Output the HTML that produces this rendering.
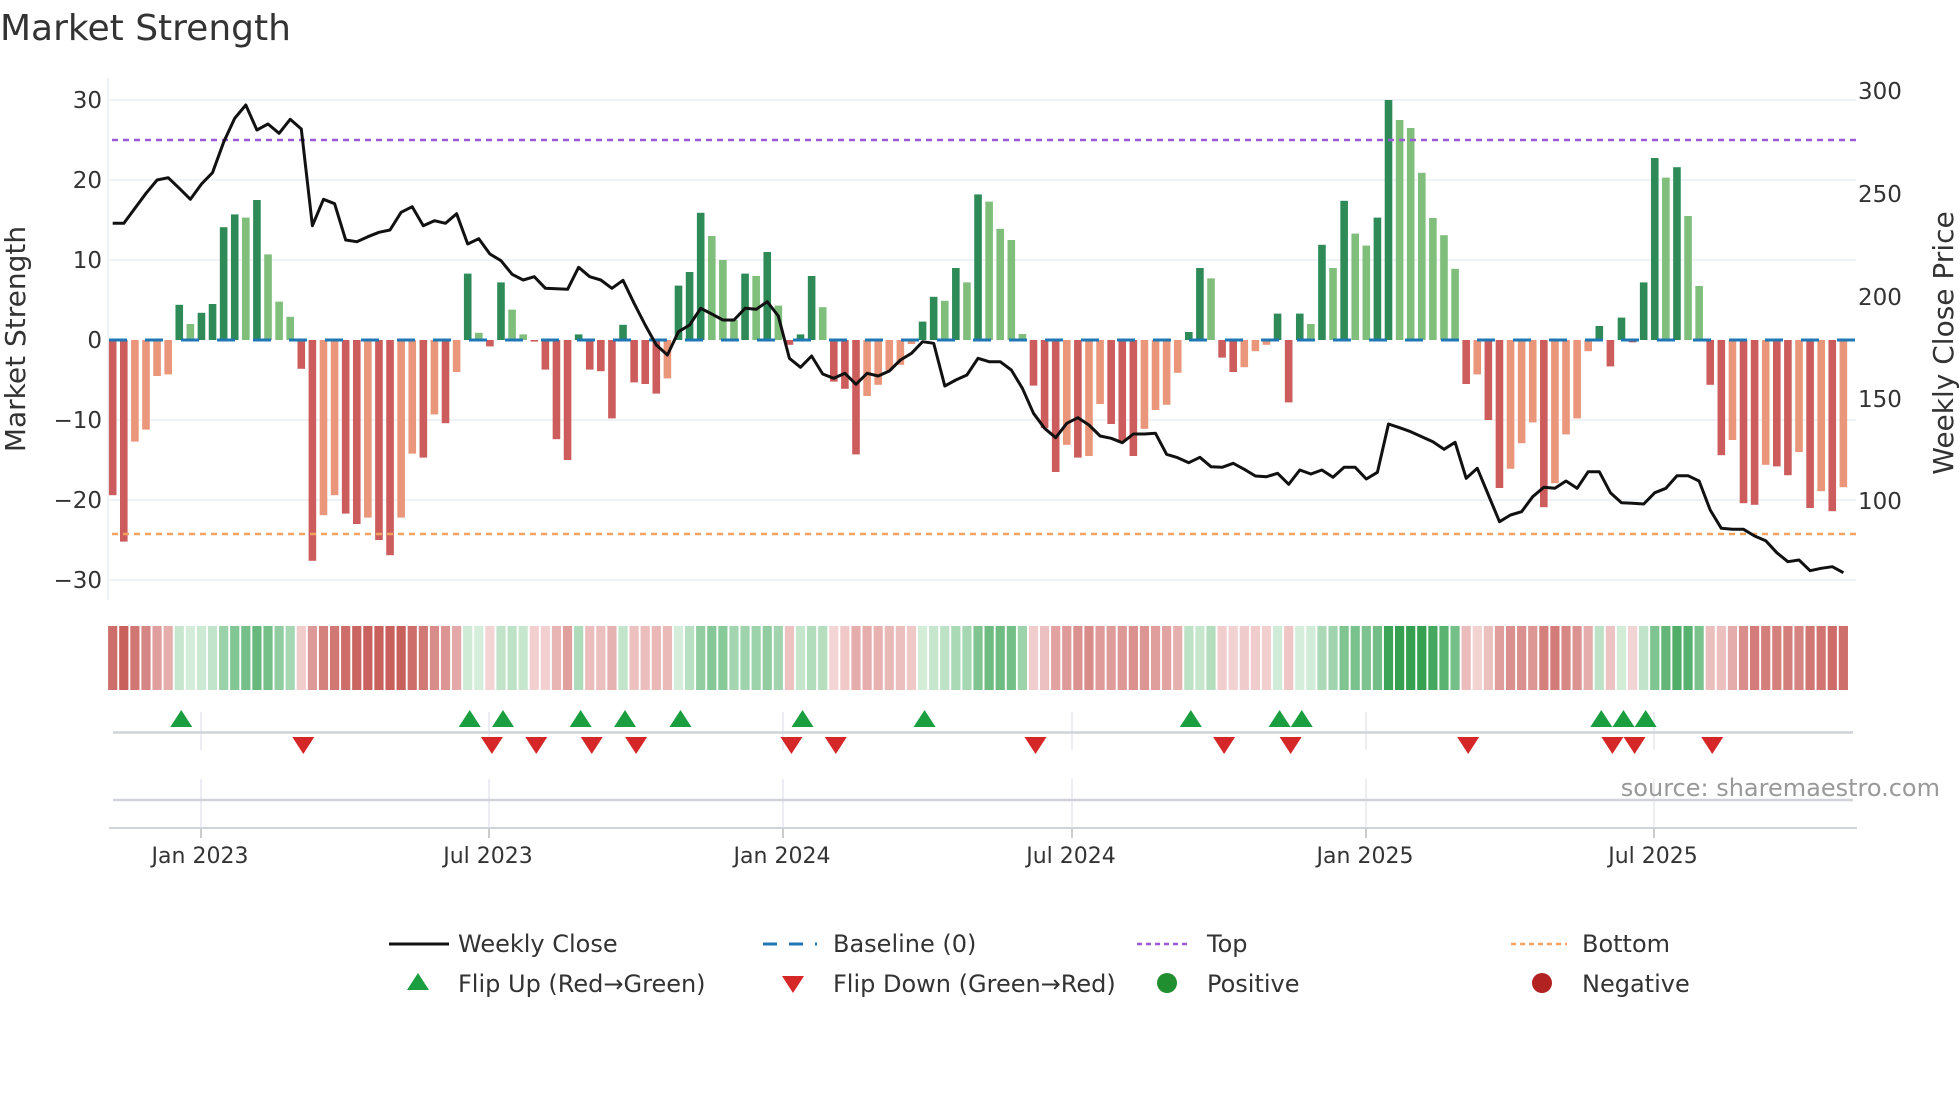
<!DOCTYPE html>
<html><head><meta charset="utf-8"><style>
html,body{margin:0;padding:0;background:#fff;}
svg{display:block;}
text{font-family:"DejaVu Sans","Liberation Sans",sans-serif;fill:#333;}
</style></head><body>
<svg id="s" width="1960" height="1102" viewBox="0 0 1960 1102" xmlns="http://www.w3.org/2000/svg">
<text x="0" y="40" font-size="36">Market Strength</text>
<g id="grid" stroke="#eceff4" stroke-width="1.5">
<line x1="108" y1="100" x2="1856" y2="100"/>
<line x1="108" y1="180" x2="1856" y2="180"/>
<line x1="108" y1="260" x2="1856" y2="260"/>
<line x1="108" y1="420" x2="1856" y2="420"/>
<line x1="108" y1="500" x2="1856" y2="500"/>
<line x1="108" y1="580" x2="1856" y2="580"/>
<line x1="108" y1="78" x2="108" y2="600"/>
</g>
<g font-size="23" text-anchor="end">
<text x="102" y="108">30</text>
<text x="102" y="188">20</text>
<text x="102" y="268">10</text>
<text x="102" y="348">0</text>
<text x="102" y="428">−10</text>
<text x="102" y="508">−20</text>
<text x="102" y="588">−30</text>
</g>
<g font-size="23">
<text x="1858" y="99">300</text>
<text x="1858" y="202">250</text>
<text x="1858" y="305">200</text>
<text x="1858" y="407">150</text>
<text x="1858" y="509">100</text>
</g>
<text transform="translate(25,339) rotate(-90)" font-size="28" text-anchor="middle">Market Strength</text>
<text transform="translate(1953,343) rotate(-90)" font-size="28" text-anchor="middle">Weekly Close Price</text>
<g id="bars"></g>
<line x1="109" y1="340" x2="1856" y2="340" stroke="#1f77b4" stroke-width="3" stroke-dasharray="18 18"/>
<line x1="112" y1="140" x2="1856" y2="140" stroke="#9b59d6" stroke-width="2.5" stroke-dasharray="6 5"/>
<line x1="112" y1="534" x2="1856" y2="534" stroke="#f4a261" stroke-width="2.5" stroke-dasharray="6 5"/>
<polyline id="price" fill="none" stroke="#111" stroke-width="3" stroke-linejoin="round"/>
<g id="strip"></g>
<g stroke="#e6e9ef" stroke-width="1.5" id="vgrid"></g>
<line x1="113" y1="732.5" x2="1853" y2="732.5" stroke="#d0d3d8" stroke-width="2.5"/>
<line x1="113" y1="800" x2="1853" y2="800" stroke="#d0d3d8" stroke-width="2.5"/>
<line x1="109" y1="828" x2="1857" y2="828" stroke="#d0d3d8" stroke-width="2"/>
<g id="marks"></g>
<g font-size="22" text-anchor="middle">
<text x="200" y="863">Jan 2023</text>
<text x="488" y="863">Jul 2023</text>
<text x="782" y="863">Jan 2024</text>
<text x="1071" y="863">Jul 2024</text>
<text x="1365" y="863">Jan 2025</text>
<text x="1653" y="863">Jul 2025</text>
</g>
<text x="1940" y="796" font-size="24" text-anchor="end" style="fill:#999">source: sharemaestro.com</text>
<g font-size="24">
<line x1="389" y1="944" x2="449" y2="944" stroke="#111" stroke-width="3"/>
<text x="458" y="952">Weekly Close</text>
<line x1="763" y1="944" x2="817" y2="944" stroke="#1f77b4" stroke-width="3" stroke-dasharray="14 12"/>
<text x="833" y="952">Baseline (0)</text>
<line x1="1137" y1="944" x2="1191" y2="944" stroke="#9b59d6" stroke-width="2.5" stroke-dasharray="5 4"/>
<text x="1207" y="952">Top</text>
<line x1="1511" y1="944" x2="1567" y2="944" stroke="#f4a261" stroke-width="2.5" stroke-dasharray="5 4"/>
<text x="1582" y="952">Bottom</text>
<polygon points="418,973 407,990 429,990" fill="#1a9e3f"/>
<text x="458" y="992">Flip Up (Red→Green)</text>
<polygon points="782,976 804,976 793,993" fill="#d62728"/>
<text x="833" y="992">Flip Down (Green→Red)</text>
<circle cx="1167" cy="983" r="10" fill="#1f8f2f"/>
<text x="1207" y="992">Positive</text>
<circle cx="1542" cy="983" r="10" fill="#b22222"/>
<text x="1582" y="992">Negative</text>
</g>
</svg>
<script>
var V=[-19.4,-25.2,-12.7,-11.2,-4.5,-4.3,4.4,2.0,3.4,4.5,14.1,15.7,15.3,17.5,10.7,4.8,2.9,-3.6,-27.6,-21.9,-19.4,-21.7,-23,-22.2,-25,-26.9,-22.2,-14.2,-14.7,-9.3,-10.4,-4,8.3,0.9,-0.8,7.2,3.8,0.7,-0.2,-3.7,-12.4,-15,0.7,-3.7,-3.9,-9.8,1.9,-5.3,-5.5,-6.7,-4.8,6.8,8.5,15.9,13,10,2.5,8.3,8.0,11,4.3,-0.6,0.7,8.0,4.1,-5.2,-6.1,-14.3,-7,-5.6,-3.8,-3.1,-0.5,2.3,5.4,4.9,9.0,7.2,18.2,17.3,13.9,12.5,0.75,-5.7,-11,-16.5,-13.1,-14.7,-14.5,-8,-10.5,-12.6,-14.5,-11.1,-8.75,-8.1,-4.1,1.0,9.0,7.7,-2.2,-4,-3.4,-1.4,-0.6,3.3,-7.8,3.3,2.0,11.9,9.0,17.4,13.3,11.8,15.3,30,27.5,26.5,20.9,15.25,13.1,8.9,-5.5,-4.3,-10,-18.5,-16.1,-12.9,-10.3,-20.9,-17.9,-11.8,-9.8,-1.4,1.75,-3.3,2.8,-0.3,7.2,22.75,20.3,21.6,15.5,6.75,-5.6,-14.4,-12.5,-20.4,-20.6,-15.6,-15.8,-16.9,-14,-21,-18.9,-21.4,-18.4];
var D="DDLLLLDLDD"+"DDLDLLLDDL"+"LDDLDDLLDL"+"DLDLDDLLDD"+"DDDDDDDDDD"+"LDDDLLLDLD"+"LDDDLDDDLL"+"LLLDDLDLDL"+"LLLDDDLDLL"+"DDDLLLLDDL"+"DDLLLDDDLD"+"LDLLDDLLLL"+"LLDLDDLLLD"+"LLLLDDDDDD"+"LDLLDDLDDL"+"DDLDLDL";
var P=[223.3,223.3,208.3,193.3,180,177.7,188.3,199.3,184,172.7,142.3,118.3,105,130,124,133.3,119.3,129,225.7,199.3,203.7,240,241.7,236.7,232.3,230,212.3,206.7,225.7,220.7,223.3,213.7,244,238.7,254,260.7,274.3,280,276.7];
var Z=[625,626,628,562,590,600,625,601,670,735,795,825,755,735,685,702,720,720,685,688,665,708,835,862,828,882,895,880,913,880,888,873,840,820,785,790,918,900,885,835,845,845,870,925,1000,1045,1073,1030,1013,1035,1068,1075,1088,1062,1062,1060,1123,1133,1148,1132,1160,1162,1150,1168,1188,1190,1180,1213,1170,1182,1170,1192,1162,1162,1197,1177,1032,1043,1055,1070,1085,1108,1087,1195,1165,1245,1325,1305,1295,1250,1222,1225,1203,1225,1175,1175,1238,1268,1270,1272,1238,1225,1187,1187,1203,1290,1345,1348,1348,1368,1382,1418,1445,1440,1472,1465,1460,1478];
for(var k=0;k<Z.length;k++)P.push(80+Z[k]/3);
var NS="http://www.w3.org/2000/svg",X0=112.7,PT=11.094;
function el(t,a,p){var e=document.createElementNS(NS,t);for(var k in a)e.setAttribute(k,a[k]);p.appendChild(e);return e;}
var bars=document.getElementById('bars'),strip=document.getElementById('strip');
var ema=0,i;
function mix(a,b,t){return 'rgb('+[0,1,2].map(function(j){return Math.round(a[j]+(b[j]-a[j])*t)}).join(',')+')';}
for(i=0;i<V.length;i++){
 var v=V[i],x=X0+PT*i,d=(D[i]||'D')=='D';
 var c=v>=0?(d?'#2e8b57':'#7fbf7b'):(d?'#cd5c5c':'#e9967a');
 var y=v>=0?340-v*8:340,h=Math.max(Math.abs(v)*8,1.5);
 el('rect',{x:x-3.8,y:y,width:7.6,height:h,fill:c},bars);
 ema=i==0?v:ema*0.55+v*0.45;
 var t=Math.min(1,Math.abs(ema)/22);
 var col=v>=0?mix([214,238,220],[52,160,80],t):mix([244,214,214],[200,96,92],t);
 el('rect',{x:x-4.6,y:626,width:9.2,height:64,fill:col},strip);
}
var pts=[];for(i=0;i<P.length;i++)pts.push((X0+PT*i).toFixed(1)+','+P[i].toFixed(1));
document.getElementById('price').setAttribute('points',pts.join(' '));
var vg=document.getElementById('vgrid');
[201,489,783,1072,1366,1654].forEach(function(x){el('line',{x1:x,y1:712,x2:x,y2:750},vg);el('line',{x1:x,y1:779,x2:x,y2:828},vg);el('line',{x1:x,y1:828,x2:x,y2:838,stroke:'#bbb'},vg);});
var mk=document.getElementById('marks');
[6,32,35,42,46,51,62,73,97,105,107,134,136,138].forEach(function(j){var x=X0+PT*j+2;el('polygon',{points:(x)+',710 '+(x-11)+',727 '+(x+11)+',727',fill:'#1a9e3f'},mk);});
[17,34,38,43,47,61,65,83,100,106,122,135,137,144].forEach(function(j){var x=X0+PT*j+2;el('polygon',{points:(x-11)+',737 '+(x+11)+',737 '+x+',754',fill:'#d62728'},mk);});
</script>
</body></html>
